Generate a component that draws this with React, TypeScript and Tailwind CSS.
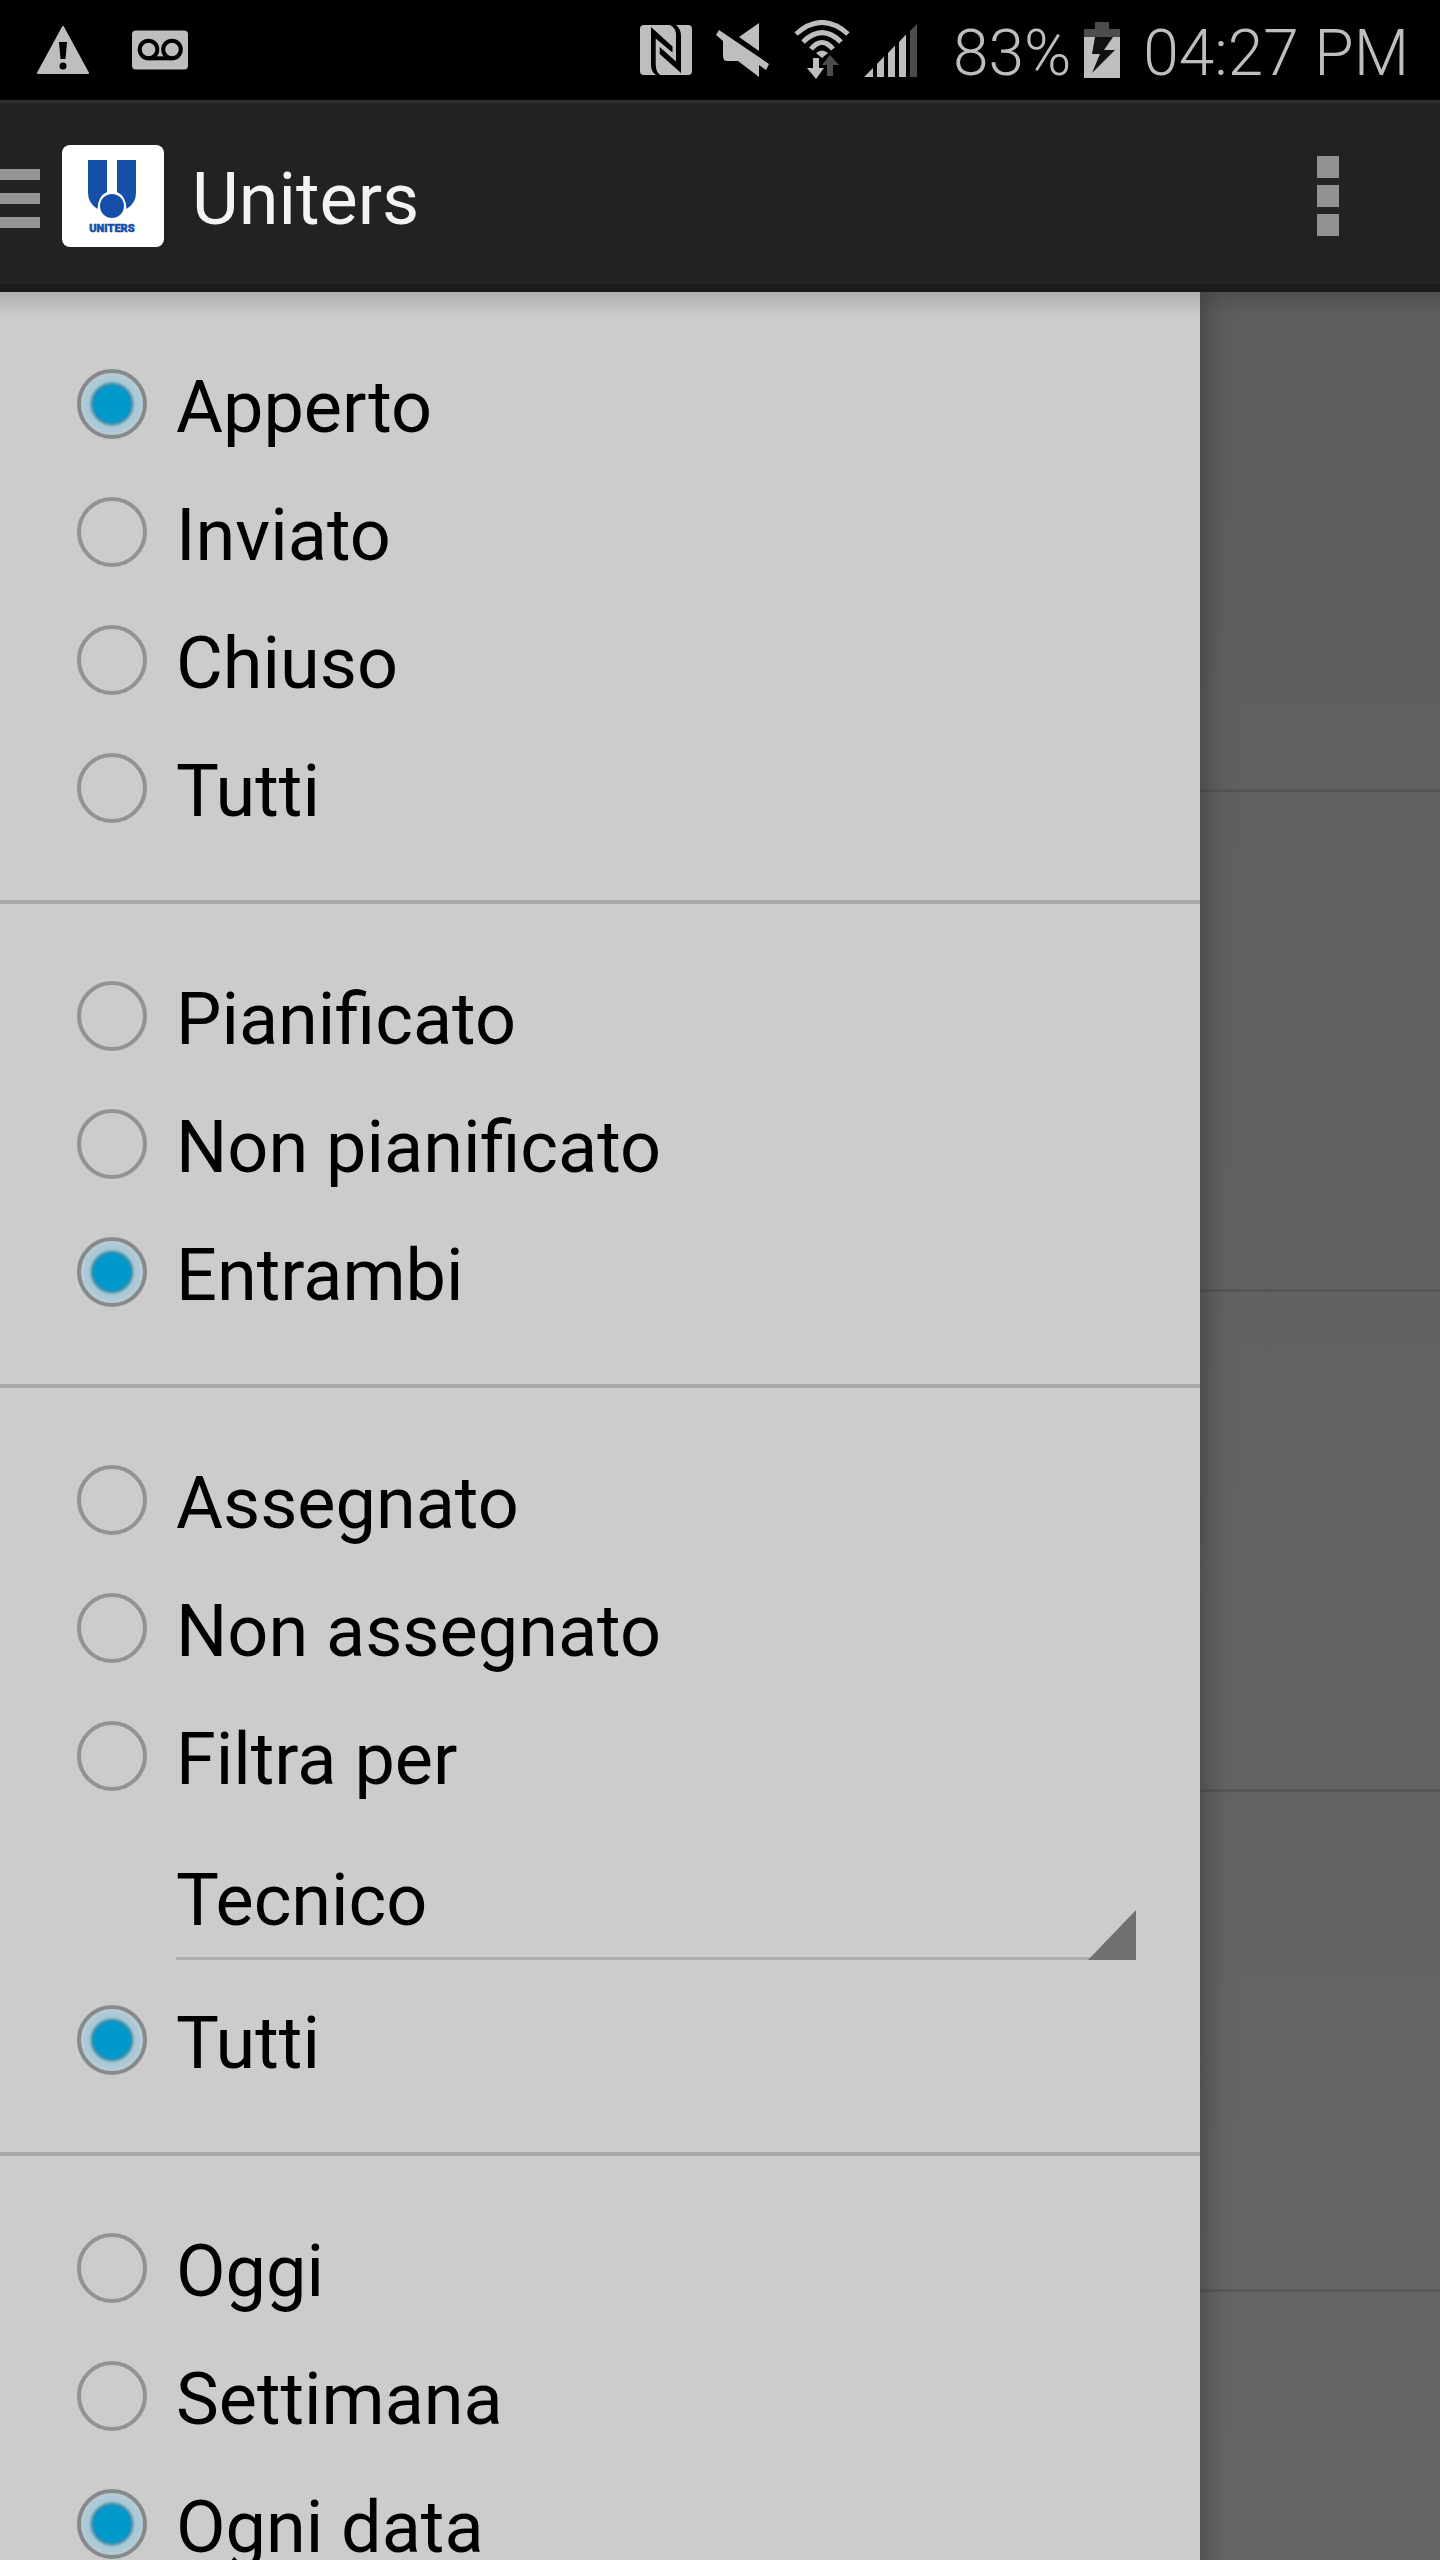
import { useState } from 'react';

const groups = [
    { name: 'stato', options: ['Apperto', 'Inviato', 'Chiuso', 'Tutti'], selected: 'Apperto' },
    { name: 'pianificazione', options: ['Pianificato', 'Non pianificato', 'Entrambi'], selected: 'Entrambi' },
    { name: 'assegnazione', options: ['Assegnato', 'Non assegnato', 'Filtra per', 'Tutti'], selected: 'Tutti' },
    { name: 'data', options: ['Oggi', 'Settimana', 'Ogni data'], selected: 'Ogni data' },
];

function StatusBar() {
    return (
        <div className="flex h-[100px] shrink-0 items-center justify-between bg-black pl-9 pr-[31px] text-[#bebebe]">
            <div className="flex items-center gap-[42px]">
                <svg width="54" height="50" viewBox="0 0 54 50" fill="currentColor">
                    <path d="M27 2 52 48H2Z" stroke="currentColor" strokeWidth="2" strokeLinejoin="round" />
                    <path d="M23 17h8l-1.500 17h-5Z" fill="#000" />
                    <circle cx="27" cy="41" r="3.500" fill="#000" />
                </svg>
                <svg width="56" height="40" viewBox="0 0 56 40">
                    <rect width="56" height="39" y="0.500" rx="4" fill="currentColor" />
                    <g fill="none" stroke="#000" strokeWidth="4">
                        <circle cx="16.500" cy="19.500" r="8.800" />
                        <circle cx="40" cy="19.500" r="8.800" />
                        <path d="M16 28.300H40" />
                    </g>
                </svg>
            </div>
            <div className="flex items-center">
                {/* NFC */}
                <svg className="mr-6" width="52" height="50" viewBox="0 0 52 50">
                    <rect width="52" height="50" rx="4" fill="currentColor" />
                    <path d="M11 2 32.500 21.500V27.500L15.700 13.500V40Q16 47 20 50H16Q11 47 11 40Z" fill="#000" />
                    <path d="M30 0H36Q41 4 41 11V48L19.700 29V22L36 36.500V10Q36 3 30 0Z" fill="#000" />
                </svg>
                {/* Muted speaker */}
                <svg className="mr-6" width="54" height="56" viewBox="0 0 54 56" fill="currentColor">
                    <path d="M43 1V29L23 15Z" />
                    <path d="M3 8 53 42 50 48 43 43V55L22 39H11Q7 39 7 34V19L0 13Z" />
                </svg>
                {/* Wi-Fi with traffic arrows */}
                <svg className="mr-[14px]" width="56" height="60" viewBox="0 0 56 60">
                    <g fill="none" stroke="currentColor" strokeWidth="5">
                        <path d="M2 14Q28-9 54 14" />
                        <path d="M9 22Q28 3 47 22" />
                        <path d="M17 29Q28 16 39 29" />
                    </g>
                    <path d="M22 33Q28 28 34 33L28 38Z" fill="currentColor" />
                    <path d="M19 38h6v10h5L22 59 13 48h6Z" fill="currentColor" />
                    <path d="M36 35 45 45h-6v11h-6V45h-5Z" fill="#4d4d4d" />
                </svg>
                {/* Signal */}
                <svg className="mr-[35px]" width="54" height="54" viewBox="0 0 54 54" fill="currentColor">
                    <path d="M0 54 9 45V54Z" />
                    <path d="M13 41 20 33.500V54H13Z" />
                    <path d="M24 30 31 22.500V54H24Z" />
                    <path d="M35 19 42 11.500V54H35Z" />
                    <path d="M46 8 53 1V54H46Z" fill="#4d4d4d" />
                </svg>
                <span className="mr-3 pt-2 text-[64px] font-[350] leading-none">83%</span>
                {/* Charging battery */}
                <svg className="mr-[22px]" width="38" height="56" viewBox="0 0 38 56">
                    <path d="M12 0H26V7H37V15H1V7H12Z" fill="#4d4d4d" />
                    <path d="M1 15H37V56H1Z" fill="currentColor" />
                    <path d="M12 15H30L21 28H32L9 51 17 32H9Z" fill="#111" />
                </svg>
                <span className="pt-2 text-[64px] font-[350] leading-none">04:27 PM</span>
            </div>
        </div>
    );
}

function Logo() {
    return (
        <svg width="102" height="102" viewBox="0 0 102 102">
            <rect width="102" height="102" rx="8" fill="#fff" />
            <path d="M26 15H45V47Q36 51 35.500 64Q26 58 26 48Z" fill="#164fa8" />
            <path d="M55 15H74V48Q74 58 64.500 64Q64 51 55 47Z" fill="#164fa8" />
            <circle cx="50" cy="61" r="12" fill="#164fa8" />
            <text x="50" y="87" textAnchor="middle" fontSize="11" fontWeight="900" fill="#164fa8" stroke="#164fa8" strokeWidth="0.500">
                UNITERS
            </text>
        </svg>
    );
}

function ActionBar() {
    return (
        <header className="flex h-48 shrink-0 items-center border-b-8 border-[#1b1b1b] bg-[#222] pt-2 shadow-[inset_0_3px_2px_#303030]">
            <button type="button" aria-label="Menu" className="mr-[22px] flex w-10 flex-col gap-[13px] pt-1">
                <span className="h-[11px] w-full bg-[#969696]" />
                <span className="h-[11px] w-full bg-[#969696]" />
                <span className="h-[11px] w-full bg-[#969696]" />
            </button>
            <Logo />
            <h1 className="ml-7 grow pt-2 text-[72px] leading-none text-[#f3f3f3]">Uniters</h1>
            <button type="button" aria-label="Altre opzioni" className="mr-[101px] flex flex-col gap-[7px]">
                <span className="size-[22px] bg-[#929292]" />
                <span className="size-[22px] bg-[#929292]" />
                <span className="size-[22px] bg-[#929292]" />
            </button>
        </header>
    );
}

function TechnicianSelect() {
    return (
        <div className="relative ml-44 mr-16 h-[156px] pb-4">
            <select
                aria-label="Tecnico"
                className="h-[140px] w-full appearance-none border-b-3 border-[#adadad] bg-transparent pt-6 text-[72px] text-black outline-none"
            >
                <option>Tecnico</option>
            </select>
            <svg className="pointer-events-none absolute bottom-4 right-0" width="48" height="50" viewBox="0 0 48 50">
                <path d="M48 0V50H0Z" fill="#707070" />
            </svg>
        </div>
    );
}

function RadioRow({ name, label, checked, onSelect }: { name: string; label: string; checked: boolean; onSelect: () => void }) {
    return (
        <label className="flex h-32 items-center gap-[29px] pl-[77px]">
            <input
                type="radio"
                name={name}
                checked={checked}
                onChange={onSelect}
                className="size-[70px] appearance-none rounded-full border-4 border-[#929292] checked:border-[#868a8c] checked:bg-[radial-gradient(circle,#0099cc_17px,#2a8db3_19px,#6ba5b9_21px,#a4c8d5_23px,#bccdd4_32px)]"
            />
            <span className="pt-2 text-[72px] leading-none">{label}</span>
        </label>
    );
}

function FilterDrawer() {
    const [values, setValues] = useState(groups.map((g) => g.selected));

    return (
        <aside className="relative w-5/6 bg-[#ccc] text-black shadow-[0_0_30px_#0006]">
            {groups.map((group, i) => (
                <fieldset key={group.name} className="border-b-4 border-[#a9a9a9] py-12 last:border-b-0">
                    {group.options.map((option) => (
                        <div key={option}>
                            <RadioRow
                                name={group.name}
                                label={option}
                                checked={values[i] === option}
                                onSelect={() => setValues(values.map((v, j) => (j === i ? option : v)))}
                            />
                            {option === 'Filtra per' && <TechnicianSelect />}
                        </div>
                    ))}
                </fieldset>
            ))}
        </aside>
    );
}

function App() {
    return (
        <div className="flex h-screen flex-col overflow-hidden font-[Roboto,sans-serif]">
            <StatusBar />
            <ActionBar />
            <main className="relative flex min-h-0 grow items-start overflow-hidden bg-linear-to-b from-[#5e5e5e] to-[#666]">
                <FilterDrawer />
                {/* Dimmed list behind the drawer */}
                <div className="grow">
                    <div className="h-[500px] border-b-3 border-[#565656]" />
                    <div className="h-[500px] border-b-3 border-[#565656]" />
                    <div className="h-[500px] border-b-3 border-[#585858]" />
                    <div className="h-[500px] border-b-3 border-[#5a5a5a]" />
                </div>
                <div className="pointer-events-none absolute inset-x-0 top-0 h-6 bg-linear-to-b from-black/15 to-transparent" />
            </main>
        </div>
    );
}

export default App;
